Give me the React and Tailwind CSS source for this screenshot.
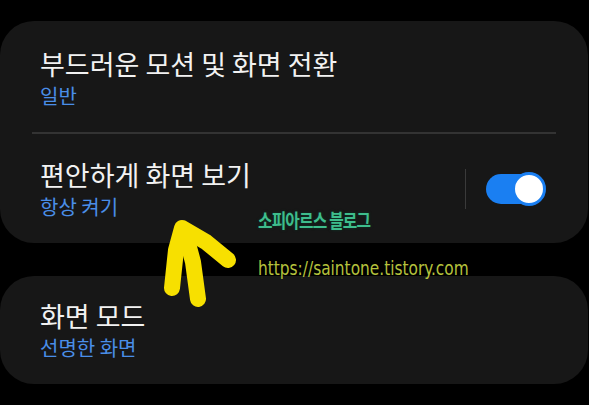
import React from 'react'

const kr = { fontFamily: '"Noto Sans CJK KR", "Noto Sans", sans-serif' }

const Row = ({ title, sub, children }) => (
  <div className='flex items-center justify-between'>
    <div className='flex flex-col gap-[4px]'>
      <p className='text-[27px] leading-[32px] text-[#f2f2f2]'>{title}</p>
      <p className='text-[20px] leading-[24px] text-[#4a8ee8]'>{sub}</p>
    </div>
    {children}
  </div>
)

const Toggle = () => (
  <div className='flex items-center gap-[20px] mr-[44px]'>
    <div className='w-px h-[40px] bg-[#3a3a3a]' />
    <div className='relative w-[58px] h-[30px] rounded-full bg-[#1a7ff2]'>
      <div className='absolute right-[-2px] top-[-2px] w-[34px] h-[34px] rounded-full bg-white border-[3px] border-[#1a7ff2]' />
    </div>
  </div>
)

export default function App() {
  return (
    <div className='relative w-[589px] h-[405px] bg-black overflow-hidden pt-[21px]' style={kr}>
      {/* first card */}
      <div className='w-[588px] bg-[#171717] rounded-[34px] pt-[27px] pb-[24px]'>
        <div className='px-[40px] pb-[24px]'>
          <Row title='부드러운 모션 및 화면 전환' sub='일반' />
        </div>
        <div className='mx-[32px] h-[2px] bg-[#333333]' />
        <div className='pl-[40px] pt-[25px]'>
          <Row title='편안하게 화면 보기' sub='항상 켜기'>
            <Toggle />
          </Row>
        </div>
      </div>

      {/* second card */}
      <div className='mt-[33px] w-[588px] bg-[#171717] rounded-[34px] pl-[40px] pt-[24px] pb-[24px]'>
        <Row title='화면 모드' sub='선명한 화면' />
      </div>

      {/* watermark */}
      <p className='absolute left-[258px] top-[206px] origin-left scale-x-[0.83] text-[19px] font-bold tracking-[-1px] text-[#3ebd8c] [text-shadow:0_0_3px_#0a3a2a]'>
        소피아르스 블로그
      </p>
      <p
        className='absolute left-[258px] top-[254px] origin-left scale-x-[0.9] text-[19px] text-[#b5c23c]'
        style={{ fontFamily: '"DejaVu Sans Condensed", "Liberation Sans Narrow", "Liberation Sans", sans-serif' }}
      >
        https://saintone.tistory.com
      </p>

      {/* hand-drawn arrow */}
      <svg className='absolute left-0 top-0' width='589' height='405'>
        <g fill='none' stroke='#f7e000' strokeWidth='16' strokeLinecap='round' strokeLinejoin='round'>
          <path d='M172 288 L176 250 L182 228 L206 242 L228 260' />
          <path d='M186 236 L193 262 L198 299' />
        </g>
      </svg>
    </div>
  )
}
